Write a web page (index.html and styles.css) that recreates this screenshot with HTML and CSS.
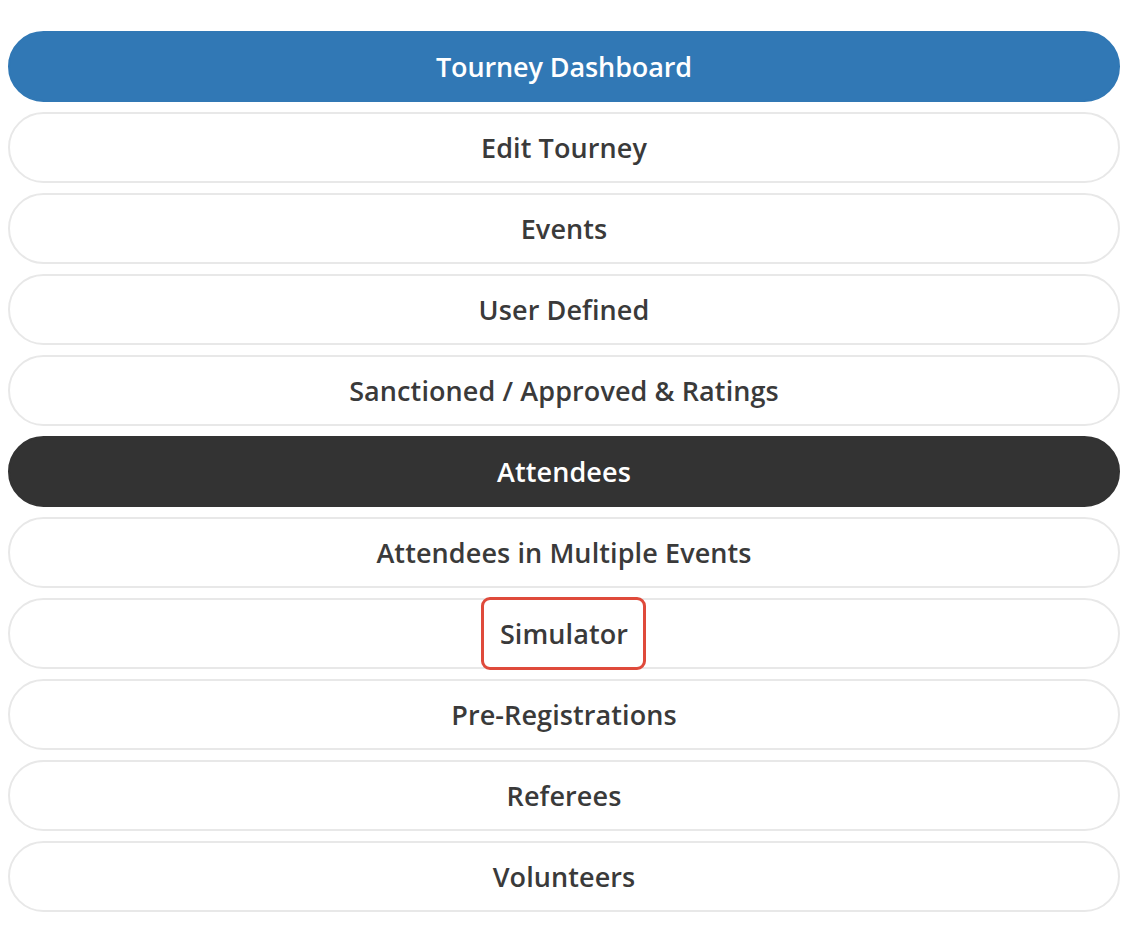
FILE: index.html
```html
<!DOCTYPE html>
<html>
<head>
<meta charset="utf-8">
<link rel="stylesheet" href="styles.css">
</head>
<body>
<nav class="menu">
  <a class="pill pill-primary">Tourney Dashboard</a>
  <a class="pill">Edit Tourney</a>
  <a class="pill">Events</a>
  <a class="pill">User Defined</a>
  <a class="pill">Sanctioned / Approved &amp; Ratings</a>
  <a class="pill pill-dark">Attendees</a>
  <a class="pill">Attendees in Multiple Events</a>
  <a class="pill"><span class="highlight">Simulator</span></a>
  <a class="pill">Pre-Registrations</a>
  <a class="pill">Referees</a>
  <a class="pill">Volunteers</a>
</nav>
</body>
</html>
```
FILE: styles.css
```css
html, body {
  margin: 0;
  padding: 0;
  background: #ffffff;
}
body {
  font-family: "Open Sans", "Noto Sans", sans-serif;
}
.menu {
  display: flex;
  flex-direction: column;
  gap: 10px;
  padding: 31px 21px 0 8px;
}
.pill {
  box-sizing: border-box;
  height: 71px;
  display: flex;
  align-items: center;
  justify-content: center;
  border: 2px solid #e8e8e8;
  border-radius: 36px;
  font-size: 27px;
  font-weight: 600;
  color: #3a3a3a;
  background: #ffffff;
  letter-spacing: 0.1px;
}
.pill-primary {
  background: #3178b5;
  border-color: #3178b5;
  color: #ffffff;
  letter-spacing: -0.1px;
}
.pill-dark {
  background: #333333;
  border-color: #333333;
  color: #ffffff;
}
.highlight {
  position: relative;
  display: inline-block;
  line-height: 37px;
}
.highlight::after {
  content: "";
  position: absolute;
  left: -19px;
  right: -18px;
  top: -18px;
  bottom: -18px;
  border: 3px solid #df4a3b;
  border-radius: 9px;
}
```
